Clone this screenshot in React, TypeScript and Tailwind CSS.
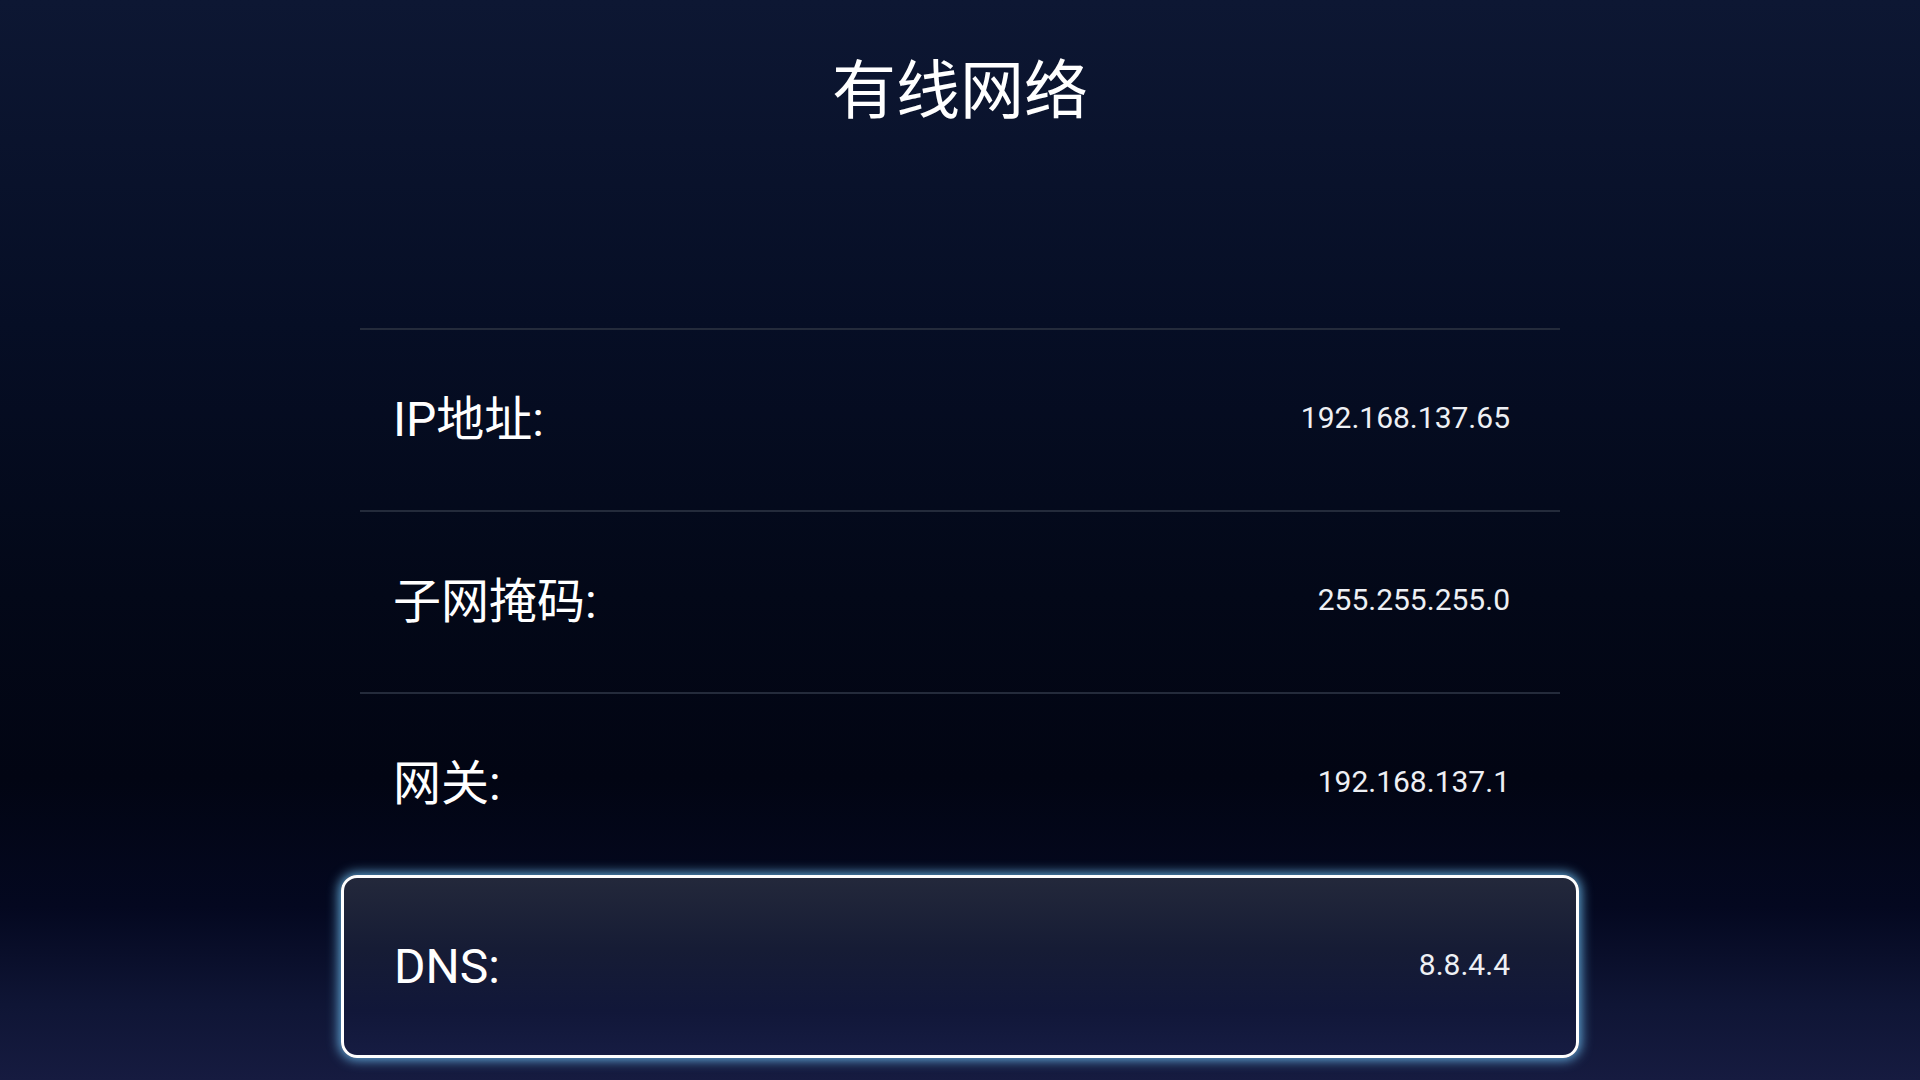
import React from 'react';

interface InfoRow {
  label: string;
  value: string;
}

const rows: InfoRow[] = [
  { label: 'IP地址:', value: '192.168.137.65' },
  { label: '子网掩码:', value: '255.255.255.0' },
  { label: '网关:', value: '192.168.137.1' },
];

const focused: InfoRow = { label: 'DNS:', value: '8.8.4.4' };

const font = "font-['Roboto','Noto_Sans_CJK_SC',sans-serif]";

const Row: React.FC<{ row: InfoRow }> = ({ row }) => (
  <div className="flex h-[182px] items-center justify-between border-t-2 border-[#242b3b] pl-[33px] pr-[50px]">
    <span className="text-[48px] leading-none text-white">{row.label}</span>
    <span className="mb-[4px] text-[30px] leading-none text-[#eef0f4]">{row.value}</span>
  </div>
);

const App: React.FC = () => {
  return (
    <div
      className={`h-[1080px] w-[1920px] overflow-hidden bg-[linear-gradient(to_bottom,#0d1733_0%,#060e25_30%,#030818_55%,#020513_72%,#040820_84%,#0f1535_93%,#161b40_100%)] ${font}`}
    >
      <h1 className="pt-[60px] text-center text-[64px] font-normal leading-none text-white">
        有线网络
      </h1>

      <div className="mx-auto mt-[204px] w-[1200px]">
        {rows.map(row => (
          <Row key={row.label} row={row} />
        ))}

        {/* focused row: framed and glowing, slightly wider than the list */}
        <div className="-mx-[19px] mt-[1px] flex h-[183px] items-center justify-between rounded-[16px] border-[3px] border-white bg-[linear-gradient(to_bottom,#23283b_0%,#161c35_40%,#111739_75%,#161c42_100%)] pl-[50px] pr-[66px] shadow-[0_0_12px_2px_rgba(110,190,240,0.9)]">
          <span className="text-[48px] leading-none text-white">{focused.label}</span>
          <span className="mb-[4px] text-[30px] leading-none text-[#eef0f4]">{focused.value}</span>
        </div>
      </div>
    </div>
  );
};

export default App;
